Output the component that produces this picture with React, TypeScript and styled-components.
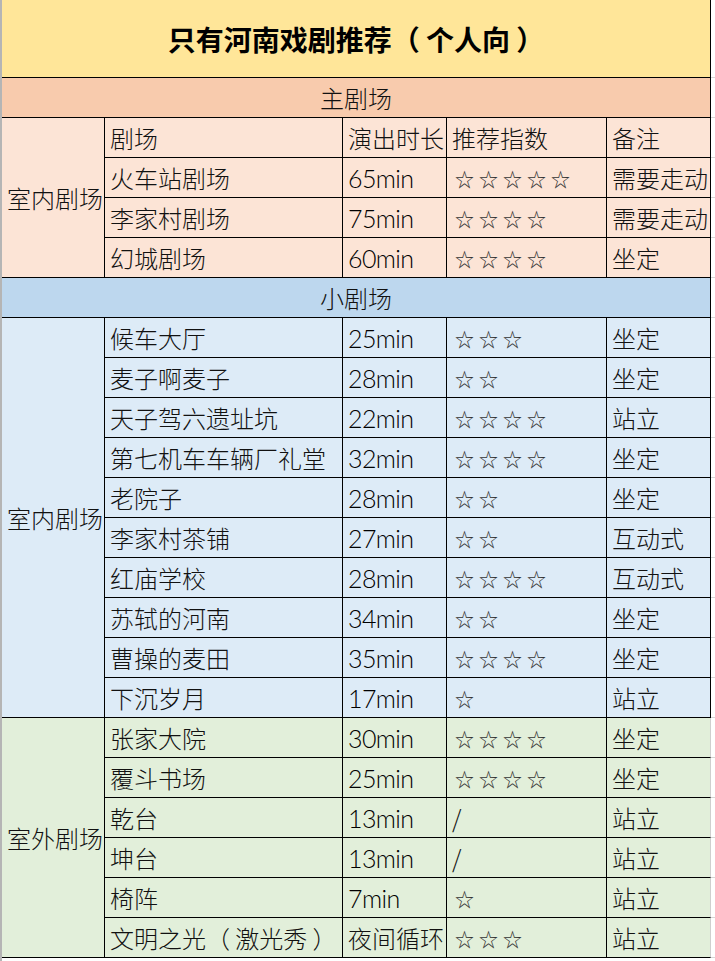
import styled, { createGlobalStyle } from "styled-components";

type Row = [string, string, string, string];

interface Group {
    label: string;
    tone: string;
    edge: string;
    rows: Row[];
}

const GlobalStyle = createGlobalStyle`
    body {
        margin: 0;
        background: #fff;
        color: #111;
        font-family: "Noto Sans CJK SC", "Noto Sans", sans-serif;
    }
`

const Sheet = styled.div`
    display: flex;
    width: 715px;
    height: 961px;
    box-sizing: border-box;
    border-left: 2px solid #b5b5b5;
`

const Grid = styled.div`
    display: grid;
    grid-template-columns: 103px 238px 104px 160px 104px;
    grid-template-rows: 78px;
    grid-auto-rows: 40px;
    align-content: start;
`

const Gutter = styled.div`
    flex: 1;
    margin-top: 77px;
    height: 881px;
    background: repeating-linear-gradient(to bottom, #d6d6d6 0 1px, transparent 1px 40px);
`

const Title = styled.div`
    grid-column: 1 / -1;
    display: flex;
    align-items: center;
    justify-content: center;
    background: #ffe699;
    border-right: 1px solid #000;
    border-bottom: 1px solid #000;
    font-size: 28px;
    font-weight: 700;
    color: #000;
`

// the sheet's font sets full-width brackets in the middle of their box
const Paren = styled.span<{ $open: boolean }>`
    ${({ $open }) => ($open ? "padding-right: 0.22em;" : "padding-left: 0.22em;")}
`

const SectionHead = styled.div<{ $tone: string }>`
    grid-column: 1 / -1;
    display: flex;
    align-items: center;
    justify-content: center;
    background: ${({ $tone }) => $tone};
    border-right: 1px solid #000;
    border-bottom: 1px solid #000;
    font-size: 24px;
    font-weight: 300;
`

const Category = styled.div<{ $tone: string; $span: number }>`
    grid-row: span ${({ $span }) => $span};
    display: flex;
    align-items: center;
    padding-left: 5px;
    background: ${({ $tone }) => $tone};
    border-right: 1px solid #000;
    border-bottom: 1px solid #000;
    font-size: 24px;
    font-weight: 300;
    white-space: nowrap;
`

const Cell = styled.div<{ $tone: string; $edge?: string }>`
    box-sizing: border-box;
    padding-left: 5px;
    background: ${({ $tone }) => $tone};
    border-right: 1px solid ${({ $edge }) => $edge || "#000"};
    border-bottom: 1px solid #000;
    font-size: 24px;
    font-weight: 300;
    line-height: 39px;
    white-space: nowrap;
    overflow: hidden;
`

const Latin = styled.span`
    font-family: "Lato", "Noto Sans CJK SC", sans-serif;
    font-size: 25px;
    font-weight: 300;
    letter-spacing: -0.6px;
    color: #000;
`

const Stars = styled.span`
    display: inline-block;
    padding-left: 3px;
    font-size: 19px;
    font-weight: 400;
    letter-spacing: 5px;
    color: #333;
    vertical-align: top;
    line-height: 41px;
`

const stars = (n: number) => "☆".repeat(n);

const withParens = (text: string) =>
    text.split(/([（）])/).map((part, i) =>
        part === "（" || part === "）"
            ? <Paren key={i} $open={part === "（"}>{part}</Paren>
            : part
    );

const renderText = (text: string, col: number) => {
    if (text.startsWith("☆")) return <Stars>{text}</Stars>;
    if (col === 1 && /^\d/.test(text)) return <Latin>{text}</Latin>;
    return withParens(text);
};

const mainRows: Row[] = [
    ["剧场", "演出时长", "推荐指数", "备注"],
    ["火车站剧场", "65min", stars(5), "需要走动"],
    ["李家村剧场", "75min", stars(4), "需要走动"],
    ["幻城剧场", "60min", stars(4), "坐定"],
];

const smallGroups: Group[] = [
    {
        label: "室内剧场",
        tone: "#ddebf7",
        edge: "#000",
        rows: [
            ["候车大厅", "25min", stars(3), "坐定"],
            ["麦子啊麦子", "28min", stars(2), "坐定"],
            ["天子驾六遗址坑", "22min", stars(4), "站立"],
            ["第七机车车辆厂礼堂", "32min", stars(4), "坐定"],
            ["老院子", "28min", stars(2), "坐定"],
            ["李家村茶铺", "27min", stars(2), "互动式"],
            ["红庙学校", "28min", stars(4), "互动式"],
            ["苏轼的河南", "34min", stars(2), "坐定"],
            ["曹操的麦田", "35min", stars(4), "坐定"],
            ["下沉岁月", "17min", stars(1), "站立"],
        ],
    },
    {
        label: "室外剧场",
        tone: "#e2efda",
        edge: "#cfcfcf",
        rows: [
            ["张家大院", "30min", stars(4), "坐定"],
            ["覆斗书场", "25min", stars(4), "坐定"],
            ["乾台", "13min", "/", "站立"],
            ["坤台", "13min", "/", "站立"],
            ["椅阵", "7min", stars(1), "站立"],
            ["文明之光（激光秀）", "夜间循环", stars(3), "站立"],
        ],
    },
];

const renderGroup = (g: Group, key: string) => [
    <Category key={key} $tone={g.tone} $span={g.rows.length}>{g.label}</Category>,
    ...g.rows.map((r, i) => r.map((text, c) => (
        <Cell key={`${key}-${i}-${c}`} $tone={g.tone} $edge={c === 3 ? g.edge : undefined}>
            {renderText(text, c)}
        </Cell>
    ))),
];

const App = () => {
    return (
        <>
            <GlobalStyle />
            <Sheet>
                <Grid>
                    <Title>{withParens("只有河南戏剧推荐（个人向）")}</Title>
                    <SectionHead $tone="#f8cbad">主剧场</SectionHead>
                    {renderGroup({ label: "室内剧场", tone: "#fce4d6", edge: "#000", rows: mainRows }, "main")}
                    <SectionHead $tone="#bdd7ee">小剧场</SectionHead>
                    {smallGroups.map((g, i) => renderGroup(g, `small-${i}`))}
                </Grid>
                <Gutter />
            </Sheet>
        </>
    )
}

export default App;
